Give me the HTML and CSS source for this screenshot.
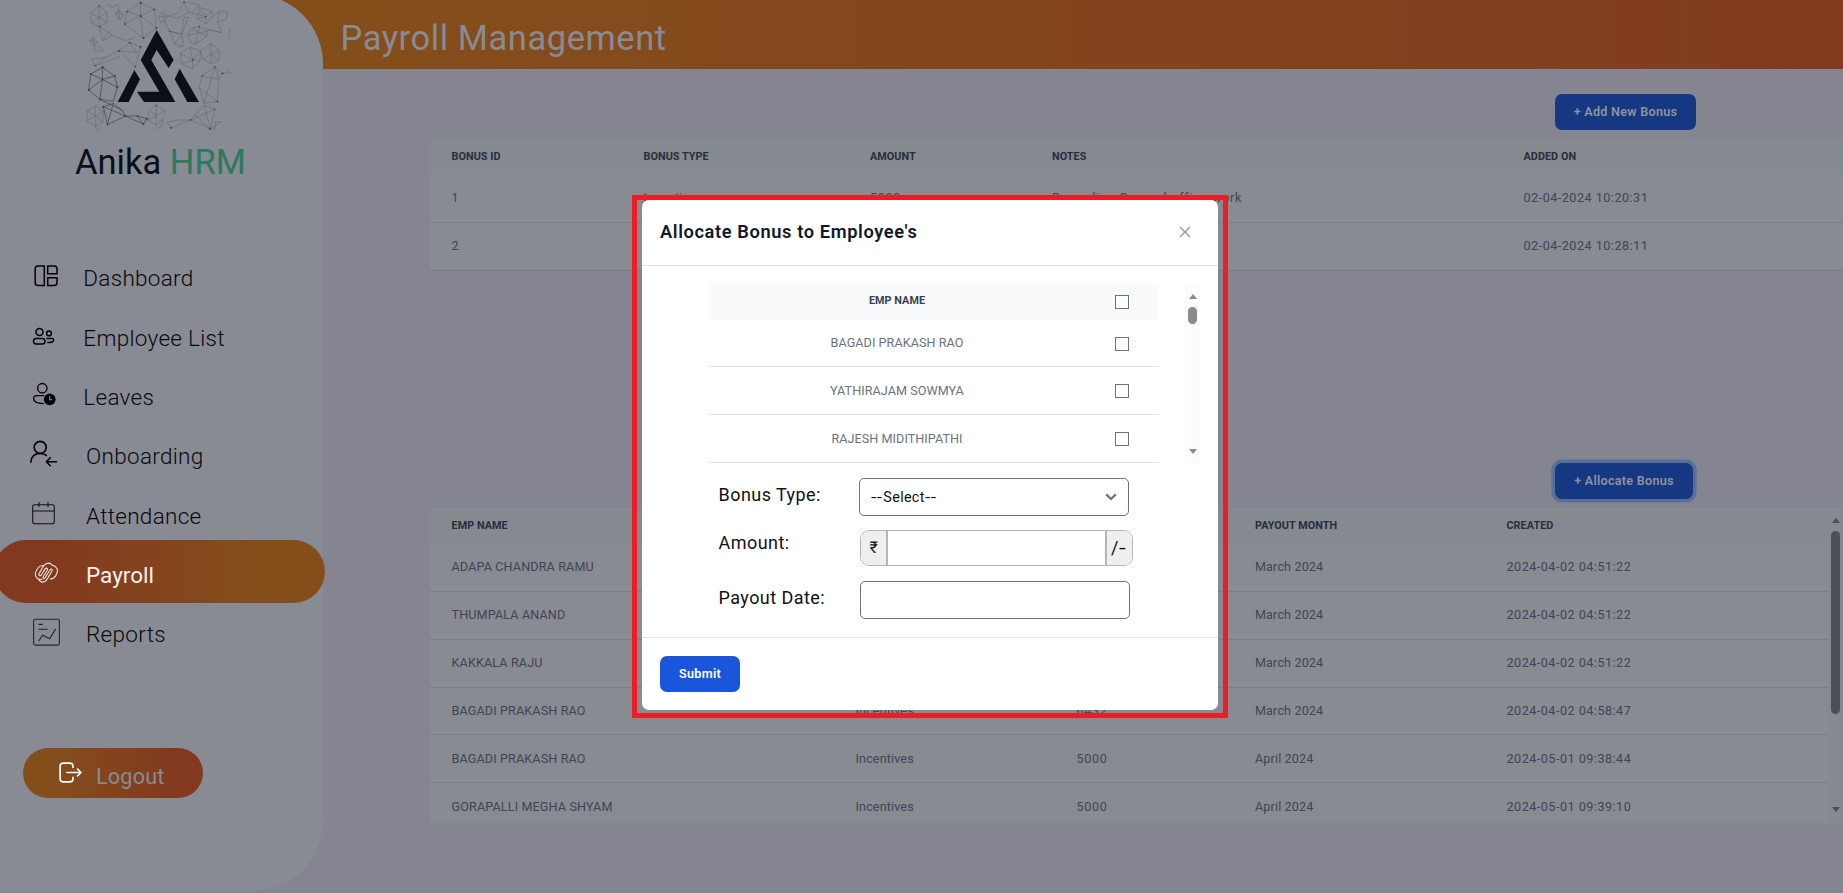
FILE: index.html
```
<!DOCTYPE html>
<html lang="en">
<head>
<meta charset="utf-8">
<title>Anika HRM - Payroll Management</title>
<link rel="stylesheet" href="styles.css">
</head>
<body>
<div class="app">
  <aside class="sidebar">
    <div class="brand">
      <svg class="logo" viewBox="0 0 969 414">
        <g fill="none" stroke="#555963" stroke-width="1.6" opacity=".75">
          <path d="M297 18L322 38L322 66L299 80L274 68L272 40ZM297 18V80M272 40L322 66M322 38L274 68M299 80L308 122L338 106L299 80M308 122L330 90M338 106L376 122L404 113"/>
          <path d="M320 12L338 22L354 14L357 36M346 38L357 30L370 44L358 60L346 38L370 44M357 30V60"/>
          <path d="M422 8L463 28L469 84L430 114L374 72L381 34ZM422 8V48L381 34M422 48L463 28M422 48L374 72M422 48L469 84M422 48L430 114"/>
          <path d="M476 50L488 36L501 48L494 66L478 64ZM488 36L494 66M476 50L501 48M501 48L534 54L566 38L552 6L534 40L501 48M552 6L598 14L575 38L566 38M494 66L509 94L545 102L566 52L552 52L545 102L509 94"/>
          <path d="M598 22L636 34L639 50L617 72L592 56ZM575 38L617 50L598 22M617 50L636 34M617 50L617 72M617 50L592 56M639 50L660 32L652 66L665 98L640 92L622 88L665 98M660 32L682 38L680 56L652 66M690 84L686 118"/>
          <path d="M562 106L574 84L598 80L622 94L620 110L586 132L574 128ZM562 106L622 94M598 80L586 132M574 84L620 110M509 94L524 132L550 138L545 102L524 132M532 142L550 138"/>
          <path d="M541 160L570 142L602 152L600 182L578 206L544 192ZM578 180L541 160M578 180L570 142M578 180L602 152M578 180L600 182M578 180V206M578 180L544 192M602 152L632 130L660 152L656 182L634 192L610 180ZM632 162L632 130M632 162L660 152M632 162L656 182M632 162L634 192M632 162L610 180"/>
          <path d="M269 122L280 112L291 126L284 140ZM269 122L291 126M280 112L284 154L310 152L291 136M275 178L285 198L318 172L275 178M318 172L356 152L388 128L421 140L406 200L356 152L410 158M285 198L360 170M388 128L410 158"/>
        </g>
        <g fill="none" stroke="#343842" stroke-width="1.8">
          <path d="M307 202L344 228L352 262L340 304L300 298L266 270L272 222ZM307 238V202M307 238L344 228M307 238L352 262M307 238L300 298M307 238L266 270M307 238L272 222"/>
          <path d="M310 320L340 310L368 332L376 348L322 374ZM300 298L368 332M310 320L376 348M340 310L322 374M376 348L412 348L440 356L430 372L376 348M412 348L430 372"/>
        </g>
        <g fill="none" stroke="#555963" stroke-width="1.6" opacity=".75">
          <path d="M286 318L310 334L308 366L286 378L260 362L262 332ZM286 348V318M286 348L310 334M286 348L308 366M286 348V378M286 348L260 362M286 348L262 332M286 378L292 394L304 382"/>
          <path d="M469 316L494 332L494 350L470 376L446 362L448 332ZM469 346V316M469 346L494 332M469 346V376M469 346L446 362M469 346L448 332M470 386L486 380L488 356"/>
          <path d="M645 200L656 238L652 304L612 310L598 264L606 228ZM645 200L612 310M606 228L656 238M598 264L652 304M645 200L668 220L692 218L680 206M656 238L668 220"/>
          <path d="M512 384L502 366L536 360L572 360L512 384M572 360L612 316L644 328L632 386L572 360M612 316L632 386M572 360L644 328M632 386L664 366L646 364L644 388L632 386M582 342L632 386"/>
        </g>
        <g fill="#3c404a">
          <path d="M419 5h6v6h-6zM420 46h5v5h-5zM379 32h5v5h-5zM461 26h5v5h-5zM467 82h5v5h-5zM428 112h5v5h-5zM372 70h4v4h-4zM305 199h6v6h-6zM342 226h5v5h-5zM349 259h6v6h-6zM297 295h6v6h-6zM264 267h6v6h-6zM270 220h5v5h-5zM305 236h5v5h-5zM307 318h5v5h-5zM320 371h5v5h-5zM373 346h5v5h-5zM428 370h5v5h-5zM437 353h6v6h-6zM410 346h4v4h-4zM354 150h5v5h-5zM386 126h4v4h-4zM419 138h5v5h-5zM404 198h4v4h-4zM283 195h4v4h-4zM295 16h4v4h-4zM297 78h4v4h-4zM550 4h4v4h-4zM615 48h4v4h-4zM576 178h4v4h-4zM511 381h5v5h-5zM570 358h4v4h-4zM627 384h5v5h-5zM643 198h4v4h-4zM650 302h5v5h-5zM604 226h4v4h-4zM665 218h5v5h-5zM642 326h4v4h-4zM467 314h4v4h-4zM596 78h4v4h-4zM507 92h4v4h-4zM388 126h4v4h-4z"/>
        </g>
        <g fill="#0b0f19">
          <polygon points="470,90 521,180 506,204 470,150 454,180 526,306 432,306 411,275 478,275 422,180"/>
          <polygon points="403,210 420,238 386,306 353,306"/>
          <polygon points="539,206 597,306 562,306 524,238"/>
        </g>
      </svg>
      <div class="brand-name">Anika <span class="green">HRM</span></div>
    </div>
    <nav class="nav">
      <a class="item"><svg class="ico" viewBox="25 258.3 40 40"><g fill="none" stroke="#000" stroke-width="1.5"><path d="M38 266.2h6.3v19.6H38a2.8 2.8 0 0 1-2.8-2.8v-14a2.8 2.8 0 0 1 2.8-2.8zM47.7 266.2h6.5a2.8 2.8 0 0 1 2.8 2.8v5h-9.300zM47.700 278h9.300v5a2.800 2.800 0 0 1-2.800 2.800h-6.500z"/></g></svg><span>Dashboard</span></a>
      <a class="item"><svg class="ico" viewBox="25 317.6 40 40"><g fill="none" stroke="#000" stroke-width="1.5"><circle cx="39.500" cy="331.500" r="3.500"/><rect x="33.500" y="338" width="11.500" height="5.600" rx="2.800"/><circle cx="49" cy="333" r="2.400"/><path d="M46.500 338h5.800c1.600 0 1.600 1.800.8 2.900-1 1.300-3.300 1.400-5.800 1.300"/></g></svg><span>Employee List</span></a>
      <a class="item"><svg class="ico" viewBox="25 377 40 40"><g fill="none" stroke="#000" stroke-width="1.300"><circle cx="42.300" cy="388.200" r="4.700"/><path d="M44 395.700h-6.500c-2.400 0-3.900 1-3.900 2.600 0 3 3.500 5.300 10 5.300"/></g><circle cx="49.700" cy="399.300" r="5.900" fill="#000"/><path d="M49.700 396.300v3.300h2.500" stroke="#888b93" stroke-width="1.200" fill="none"/></svg><span>Leaves</span></a>
      <a class="item wide"><svg class="ico" viewBox="25 436.300 40 40"><g fill="none" stroke="#000" stroke-width="1.600" stroke-linecap="round" stroke-linejoin="round"><circle cx="40.200" cy="447.700" r="6"/><path d="M30.800 462.500c.5-5.800 4.200-8.700 9.400-8.700 2.400 0 4.500.6 6.200 1.900M56.500 462H46.300M50.300 458l-4 4 4 4"/></g></svg><span>Onboarding</span></a>
      <a class="item wide"><svg class="ico" viewBox="25 495.600 40 40"><g fill="none" stroke="#111" stroke-width="1.050"><rect x="32.700" y="504.300" width="21.600" height="19" rx="2"/><path d="M32.700 510.600h21.600M39 501.500v5.200M48 501.500v5.200"/></g></svg><span>Attendance</span></a>
      <a class="item wide active"><svg class="ico" viewBox="25 555 40 40"><g fill="none" stroke="#f3e7e0" stroke-width="1.100" stroke-linejoin="round" stroke-linecap="round"><path d="M42 579.300h-2.500c-2 0-4.300-2.600-4.200-5.500 0-2 1.500-4 2.700-5.800.9-1.400 1.700-2.300 3.500-2.300h2.200l-4.700 8c-.9 1.600.9 3 2.100 1.500l4-6.300c1-1.600 3.100-.5 2.300 1.100l-4 6.500c-1 1.700.6 2.800 1.700 1.300l5-8c.9-1.400 2.700-.4 2 1l-4.700 8c-1.300 2.200-2.600 3.300-4.600 3.300-2.300 0-3.500-1.200-4.300-2.800M43.700 565.700c1.300-1.700 3-2.600 5-2.600 1.500 0 2.500.7 3.500 2.200 2.600.2 5.300 2.800 5.300 5.200 0 3-2.800 7.800-5.500 8.400h-1.500"/></g></svg><span>Payroll</span></a>
      <a class="item wide"><svg class="ico" viewBox="25 614.300 40 40"><g fill="none" stroke="#23262d" stroke-width="1.100"><rect x="33.600" y="619.600" width="25.800" height="25.800" rx="1.800"/><path d="M38.500 624.700h4.300M38.500 629.500h9M38.500 641.500l4.200-6 7 3.500 6-9.800"/></g></svg><span>Reports</span></a>
    </nav>
    <a class="logout"><svg viewBox="58 762 25 23"><g fill="none" stroke="#fff" stroke-width="1.600" stroke-linecap="round" stroke-linejoin="round"><path d="M73 768.500v-1.200c0-2-1-3.200-3-3.200h-6.700c-2 0-3.200 1.200-3.200 3.200v12.400c0 2 1.200 3.200 3.200 3.200H70c2 0 3-1.200 3-3.200v-1.500M67 773.500h13.700M77.500 770l3.500 3.500-3.500 3.500"/></g></svg><span>Logout</span></a>
  </aside>

  <header class="topbar"><h1>Payroll Management</h1></header>

  <main class="main">
    <div class="actions"><button class="btn dim add">+ Add New Bonus</button></div>
    <section class="table bonus">
      <div class="row head"><span>BONUS ID</span><span>BONUS TYPE</span><span>AMOUNT</span><span>NOTES</span><span>ADDED ON</span></div>
      <div class="row"><span>1</span><span>Incentives</span><span class="num">5000</span><span class="note">Regarding General office work</span><span class="stamp">02-04-2024 10:20:31</span></div>
      <div class="row"><span>2</span><span></span><span></span><span></span><span class="stamp">02-04-2024 10:28:11</span></div>
    </section>
    <div class="actions second"><button class="btn dim focus">+ Allocate Bonus</button></div>
    <div class="scroller">
      <section class="table alloc">
        <div class="row head"><span>EMP NAME</span><span></span><span></span><span>PAYOUT MONTH</span><span>CREATED</span></div>
        <div class="row"><span>ADAPA CHANDRA RAMU</span><span></span><span></span><span>March 2024</span><span class="stamp">2024-04-02 04:51:22</span></div>
        <div class="row"><span>THUMPALA ANAND</span><span></span><span></span><span>March 2024</span><span class="stamp">2024-04-02 04:51:22</span></div>
        <div class="row"><span>KAKKALA RAJU</span><span></span><span></span><span>March 2024</span><span class="stamp">2024-04-02 04:51:22</span></div>
        <div class="row"><span>BAGADI PRAKASH RAO</span><span>Incentives</span><span class="num">6432</span><span>March 2024</span><span class="stamp">2024-04-02 04:58:47</span></div>
        <div class="row"><span>BAGADI PRAKASH RAO</span><span>Incentives</span><span class="num">5000</span><span>April 2024</span><span class="stamp">2024-05-01 09:38:44</span></div>
        <div class="row"><span>GORAPALLI MEGHA SHYAM</span><span>Incentives</span><span class="num">5000</span><span>April 2024</span><span class="stamp">2024-05-01 09:39:10</span></div>
      </section>
      <div class="bar page-bar"><i class="up"></i><i class="thumb"></i><i class="down"></i></div>
    </div>
  </main>
</div>

<div class="frame">
  <div class="modal">
    <div class="modal-head"><h2>Allocate Bonus to Employee's</h2><svg class="close" viewBox="0 0 12 12"><path d="M1 1l10 10M11 1L1 11" stroke="#9299a8" stroke-width="1.400" fill="none"/></svg></div>
    <div class="modal-body">
      <div class="picker">
        <div class="people">
          <div class="person phead"><span>EMP NAME</span><i class="check"></i></div>
          <div class="person"><span>BAGADI PRAKASH RAO</span><i class="check"></i></div>
          <div class="person"><span>YATHIRAJAM SOWMYA</span><i class="check"></i></div>
          <div class="person"><span>RAJESH MIDITHIPATHI</span><i class="check"></i></div>
        </div>
        <div class="bar modal-bar"><i class="up"></i><i class="thumb"></i><i class="down"></i></div>
      </div>
      <div class="field type"><label>Bonus Type:</label><div class="control select"><span><span class="dash">--</span>Select<span class="dash">--</span></span><svg viewBox="0 0 12 8"><path d="M1.200 1.400L6 6l4.800-4.600" stroke="#6b7280" stroke-width="2.200" fill="none"/></svg></div></div>
      <div class="field amount"><label>Amount:</label><div class="group"><span class="addon">₹</span><span class="blank"></span><span class="addon end">/<span class="stroke">-</span></span></div></div>
      <div class="field date"><label>Payout Date:</label><div class="control"></div></div>
    </div>
    <div class="modal-foot"><button class="btn submit">Submit</button></div>
  </div>
</div>
</body>
</html>
```
FILE: styles.css
```
* { box-sizing: border-box; }
body { margin: 0; width: 1843px; height: 893px; overflow: hidden; background: #848590; font-family: Roboto, "Noto Sans", sans-serif; }
h1, h2 { margin: 0; font-weight: 400; }
i { display: block; }
button { font-family: inherit; border: 0; padding: 0; }

.app { display: grid; grid-template-columns: 323px 1520px; grid-template-rows: 69px 824px; }

/* Sidebar */
.sidebar { grid-column: 1; grid-row: 1 / 3; z-index: 1; height: 897px; margin-top: -6px; padding-top: 6px; background: #888b93; border-radius: 0 70px 70px 0; }
.brand { height: 248.6px; }
.logo { display: block; width: 323px; height: 138px; }
.brand-name { margin-left: 75px; height: 48px; line-height: 49px; font-size: 34.500px; letter-spacing: 0; color: #0b0f18; white-space: nowrap; }
.green { color: #2a7a5b; }
.item { display: flex; align-items: center; height: 59.330px; padding-left: 25px; gap: 18.300px; font-size: 22.500px; font-weight: 300; letter-spacing: .3px; color: #08090c; }
.item.wide { gap: 21px; }
.ico { width: 40px; height: 40px; flex: none; }
.item.active { width: 331px; height: 63px; margin: -5.600px 0 1.930px -6px; padding: 7px 0 0 31px; border-radius: 32px; background: linear-gradient(90deg, #82391f 15%, #844e1b 80%); color: #f7f0ec; font-weight: 400; letter-spacing: 0; }
.logout { display: flex; align-items: center; width: 180px; height: 50px; margin: 84px 0 0 23px; padding: 0 0 0 35px; gap: 13px; border-radius: 25px; background: linear-gradient(90deg, #844e1b 15%, #82391f 85%); color: #888b93; font-size: 21.600px; letter-spacing: .2px; }
.logout svg { width: 25px; height: 23px; }
.logout span { padding-top: 8px; }

/* Header bar */
.topbar { grid-column: 2; grid-row: 1; margin-left: -70px; padding-left: 87.500px; background: linear-gradient(90deg, #844e1b 8%, #82391f 106%); }
.topbar h1 { line-height: 76px; font-size: 34.500px; letter-spacing: .56px; color: #888b93; }

/* Tables behind the dialog */
.main { grid-column: 2; grid-row: 2; padding-left: 107px; }
.actions { height: 70px; padding: 25px 0 0 1125px; }
.actions.second { margin-top: 122px; height: 115px; padding-top: 70px; }
.btn { display: block; height: 36px; padding-bottom: 1px; border-radius: 7px; font-size: 12.600px; font-weight: 600; letter-spacing: .28px; }
.dim { background: #163781; color: #8f939c; }
.add { width: 141px; }
.focus { width: 138px; box-shadow: 0 0 0 3.600px #586f98; }
.row { display: grid; align-items: center; height: 47.850px; padding: 0 0 1px 21.500px; border-bottom: 1px solid #7a7d89; background: #888b92; color: #3e4553; font-size: 12.600px; letter-spacing: .13px; white-space: nowrap; }
.row.head { height: 36px; padding-bottom: 2px; border: 0; background: #858990; color: #282e3b; font-size: 10.800px; font-weight: 700; letter-spacing: .06px; }
.stamp { letter-spacing: .5px; }
.num { letter-spacing: .7px; }
.note { letter-spacing: .75px; }
.bonus { height: 132px; }
.bonus .row { grid-template-columns: 192px 226.500px 182px 471.500px 1fr; }
.scroller { display: flex; height: 315px; overflow: hidden; }
.alloc { width: 1398px; }
.alloc .row { grid-template-columns: 404px 221px 178.500px 251.500px 1fr; }

/* Scrollbars */
.bar { width: 15px; display: flex; flex-direction: column; align-items: center; }
.up, .down { border: 4.800px solid transparent; border-top-width: 0; border-bottom: 5px solid currentColor; }
.down { border-bottom-width: 0; border-top: 5px solid currentColor; margin-top: auto; }
.thumb { width: 9px; border-radius: 5px; background: currentColor; }
.page-bar { background: #868992; color: #4c4f58; padding: 10px 0 11px; }
.page-bar .thumb { height: 183px; margin-top: 8px; }
.modal-bar { height: 180px; margin-left: 26px; background: #fcfcfc; color: #8b8b8b; padding: 10px 0; }
.modal-bar .thumb { height: 17px; margin-top: 8px; }

/* Dialog */
.frame { position: absolute; left: 632px; top: 195px; width: 596px; height: 523px; border: 5px solid #ee1c24; padding: 0 5px 3px; z-index: 2; }
.modal { height: 510px; border-radius: 7px; background: #fff; }
.modal-head { display: flex; align-items: center; justify-content: space-between; height: 66px; padding: 0 27px 1px 18px; border-bottom: 1px solid #e3e4e7; }
.modal-head h2 { padding-bottom: 1px; font-size: 18.300px; font-weight: 600; letter-spacing: .6px; color: #111827; }
.close { width: 12px; height: 12px; }
.modal-body { height: 372px; padding: 18px 0 0 67px; border-bottom: 1px solid #e3e4e7; }
.picker { display: flex; height: 180px; }
.people { width: 450px; }
.person { display: grid; grid-template-columns: 376px 1fr; align-items: center; height: 48px; padding-bottom: 1px; border-bottom: 1px solid #e3e4e7; color: #6b7280; font-size: 12.600px; letter-spacing: .06px; }
.person span { text-align: center; }
.phead { height: 36px; padding-bottom: 3px; border: 0; background: #f9fafb; color: #374151; font-size: 10.800px; font-weight: 700; }
.person:nth-child(2) { height: 47px; }
.check { width: 14px; height: 14px; margin: 2px 0 0 30px; border: 1px solid #6b7280; background: #fff; }
.field { display: grid; padding-left: 9.500px; font-size: 18px; color: #111; }
.field label { line-height: 22px; letter-spacing: .45px; }
.type { height: 52px; padding-top: 14px; grid-template-columns: 140.500px 1fr; }
.type label { padding-top: 6px; }
.control { width: 270px; height: 38px; border: 1px solid #6b7280; border-radius: 5px; }
.select { display: flex; align-items: center; justify-content: space-between; padding: 0 11px; font-size: 14.400px; letter-spacing: .3px; }
.select svg { width: 12px; height: 8px; }
.dash { display: inline-block; transform: scaleX(1.350); transform-origin: 0 50%; margin-right: 3.800px; }
.amount { height: 51px; margin-top: 14px; grid-template-columns: 141.500px 1fr; }
.amount label { padding-top: 2px; }
.group { display: flex; width: 273px; height: 36px; border: 1px solid #b5b5b5; border-radius: 9px; overflow: hidden; }
.addon { width: 27px; padding-left: 8.500px; line-height: 34px; background: #efefef; border-right: 2px solid #b5b5b5; font-size: 16.200px; }
.addon.end { width: 27px; padding-left: 4px; border-right: 0; border-left: 2px solid #b5b5b5; font-size: 18px; letter-spacing: 1px; white-space: nowrap; }
.stroke { display: inline-block; transform: scaleX(1.350); transform-origin: 0 50%; }
.blank { flex: 1; }
.date { grid-template-columns: 141.500px 1fr; }
.date label { padding-top: 6px; }
.modal-foot { padding: 18px; }
.submit { width: 80px; background: #1a56db; color: #fff; }
```
